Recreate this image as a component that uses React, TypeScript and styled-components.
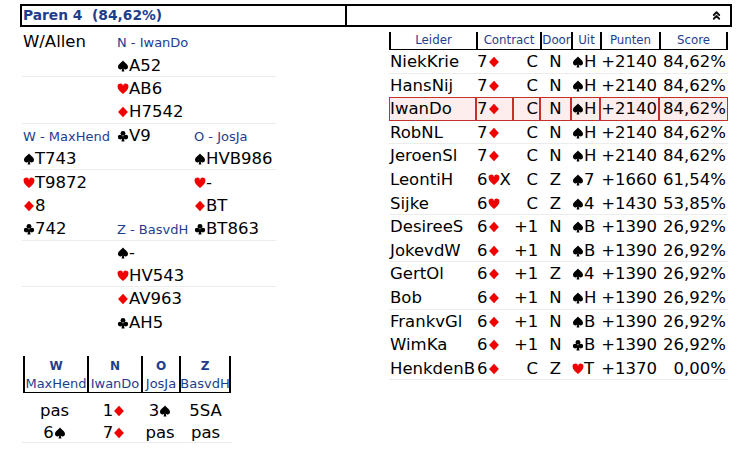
import styled, { createGlobalStyle } from "styled-components";
import { ChevronsUp } from "lucide-react";

const BLUE = "#1d3e8e";
const RED = "#f00000";

type SuitKey = "S" | "H" | "D" | "C";

const GlobalStyle = createGlobalStyle`
  body {
    margin: 0;
    background: #fff;
    color: #000;
    font-family: "DejaVu Sans", Verdana, sans-serif;
  }
`;

const SuitSvg = styled.svg<{ $red: boolean }>`
  width: 12px;
  height: 12px;
  vertical-align: -1px;
  fill: ${(p) => (p.$red ? RED : "#000")};
`;

const Suit = ({ s }: { s: SuitKey }) => (
  <SuitSvg viewBox="0 0 12 12" $red={s === "H" || s === "D"}>
    {s === "S" && (
      <path d="M6 0.6C4.5 2.6 1 4.4 1 7a2.4 2.4 0 0 0 4.3 1.5L4.6 11.5h2.8L6.7 8.5A2.4 2.4 0 0 0 11 7C11 4.4 7.5 2.6 6 0.6Z" />
    )}
    {s === "H" && (
      <path d="M6 11C2.6 8.1 0.6 6.1 0.6 3.8A2.7 2.7 0 0 1 6 2.9A2.7 2.7 0 0 1 11.4 3.8C11.4 6.1 9.4 8.1 6 11Z" />
    )}
    {s === "D" && <path d="M6 0.8L10.9 6L6 11.2L1.1 6Z" />}
    {s === "C" && (
      <>
        <circle cx="6" cy="3.3" r="2.4" />
        <circle cx="3.2" cy="7.1" r="2.4" />
        <circle cx="8.8" cy="7.1" r="2.4" />
        <path d="M5.3 6L4.5 11.5h3L6.7 6Z" />
      </>
    )}
  </SuitSvg>
);

// suit letters are marked with a leading "#": "7#D" -> 7 + diamond
const Cards = ({ text }: { text: string }) => {
  const parts: React.ReactNode[] = [];
  for (let i = 0; i < text.length; i++) {
    if (text[i] === "#") {
      parts.push(<Suit key={i} s={text[i + 1] as SuitKey} />);
      i++;
    } else {
      parts.push(text[i]);
    }
  }
  return <>{parts}</>;
};

/* ---------- title bar ---------- */

const Page = styled.div`
  width: 737px;
  padding: 4px 0 0 20px;
  box-sizing: border-box;
`;

const TitleBar = styled.div`
  display: flex;
  width: 712px;
  height: 23px;
  box-sizing: border-box;
  border: 2px solid #000;
`;

const TitleText = styled.div`
  width: 322px;
  border-right: 2px solid #000;
  padding-left: 1px;
  font-size: 13.8px;
  font-weight: bold;
  color: ${BLUE};
  line-height: 19px;
  white-space: pre;
`;

const TitleTools = styled.div`
  flex: 1;
  display: flex;
  justify-content: flex-end;
  align-items: center;
  padding-right: 7px;
  color: #111;
`;

/* ---------- main ---------- */

const Main = styled.div`
  display: flex;
`;

const LeftCol = styled.div`
  width: 369px;
  display: flex;
  flex-direction: column;
`;

const HandTable = styled.div`
  margin: 3px 0 0 2px;
  width: 254px;
`;

const HandRow = styled.div<{ $sep?: boolean }>`
  display: grid;
  grid-template-columns: 94px 77px 83px;
  height: 23.4px;
  align-items: center;
  font-size: 16.5px;
  white-space: nowrap;
  box-shadow: ${(p) => (p.$sep ? "inset 0 -1px 0 #ececec" : "none")};
`;

const HandCell = styled.div`
  padding-left: 1px;
`;

const Seat = styled.span`
  font-size: 13px;
  color: ${BLUE};
`;

const Dealer = styled.span`
  font-size: 16.5px;
`;

/* ---------- bidding ---------- */

const Bidding = styled.div`
  margin: 22px 0 0 3px;
  width: 208px;
`;

const BidGrid = styled.div`
  display: grid;
  grid-template-columns: 64px 54px 38px 52px;
`;

const BidHead = styled.div<{ $last?: boolean }>`
  height: 37px;
  box-sizing: border-box;
  border-left: 2px solid #000;
  border-right: ${(p) => (p.$last ? "2px solid #000" : "none")};
  border-bottom: 1px solid #000;
  display: flex;
  flex-direction: column;
  align-items: center;
  color: ${BLUE};
  white-space: nowrap;
`;

const BidDir = styled.div`
  height: 20px;
  line-height: 20px;
  font-size: 12px;
  font-weight: bold;
`;

const BidName = styled.div`
  height: 16px;
  line-height: 16px;
  font-size: 13px;
`;

const BidBody = styled.div`
  margin-top: 6px;
  margin-left: -1px;
  width: 210px;
  box-shadow: inset 0 -1px 0 #ececec;
`;

const BidRow = styled.div`
  display: grid;
  grid-template-columns: 65px 54px 38px 53px;
  height: 22px;
  align-items: center;
  font-size: 16.5px;
  text-align: center;
  white-space: nowrap;
`;

/* ---------- results ---------- */

const Results = styled.div`
  margin-top: 5px;
  width: 339px;
`;

const COLS = "87px 37px 27px 31px 29px 59px 69px";

const ResHead = styled.div`
  display: grid;
  grid-template-columns: 87px 64px 31px 29px 59px 69px;
  height: 18px;
  box-sizing: border-box;
  border-bottom: 1px solid #000;
`;

const HeadCell = styled.div<{ $last?: boolean }>`
  border-left: 2px solid #000;
  border-right: ${(p) => (p.$last ? "2px solid #000" : "none")};
  text-align: center;
  font-size: 11.8px;
  line-height: 17px;
  color: ${BLUE};
  white-space: nowrap;
`;

const ResRow = styled.div<{ $hl?: boolean; $sep?: boolean }>`
  display: grid;
  grid-template-columns: ${COLS};
  height: 23.6px;
  font-size: 16.5px;
  white-space: nowrap;
  background: ${(p) => (p.$hl ? "#fdeded" : "transparent")};
  box-shadow: ${(p) => (p.$sep ? "inset 0 -1px 0 #ececec" : "none")};
`;

const ResCell = styled.div<{ $align: "left" | "right" | "center"; $hl?: boolean }>`
  border: 1px solid ${(p) => (p.$hl ? "#c4302b" : "transparent")};
  text-align: ${(p) => p.$align};
  padding-right: ${(p) => (p.$align === "right" ? "1px" : "0")};
  line-height: 21.6px;
`;

/* ---------- data ---------- */

const hand: [React.ReactNode, React.ReactNode, React.ReactNode, boolean][] = [
  [<Dealer>W/Allen</Dealer>, <Seat>N - IwanDo</Seat>, null, false],
  [null, <Cards text="#SA52" />, null, true],
  [null, <Cards text="#HAB6" />, null, false],
  [null, <Cards text="#DH7542" />, null, true],
  [<Seat>W - MaxHend</Seat>, <Cards text="#CV9" />, <Seat>O - JosJa</Seat>, false],
  [<Cards text="#ST743" />, null, <Cards text="#SHVB986" />, true],
  [<Cards text="#HT9872" />, null, <Cards text="#H-" />, false],
  [<Cards text="#D8" />, null, <Cards text="#DBT" />, false],
  [<Cards text="#C742" />, <Seat>Z - BasvdH</Seat>, <Cards text="#CBT863" />, true],
  [null, <Cards text="#S-" />, null, false],
  [null, <Cards text="#HHV543" />, null, true],
  [null, <Cards text="#DAV963" />, null, false],
  [null, <Cards text="#CAH5" />, null, false],
];

const bidders = [
  ["W", "MaxHend"],
  ["N", "IwanDo"],
  ["O", "JosJa"],
  ["Z", "BasvdH"],
];

const bids = [
  ["pas", "1#D", "3#S", "5SA"],
  ["6#S", "7#D", "pas", "pas"],
];

type Result = [string, string, string, string, string, string, string];

const results: Result[] = [
  ["NiekKrie", "7#D", "C", "N", "#SH", "+2140", "84,62%"],
  ["HansNij", "7#D", "C", "N", "#SH", "+2140", "84,62%"],
  ["IwanDo", "7#D", "C", "N", "#SH", "+2140", "84,62%"],
  ["RobNL", "7#D", "C", "N", "#SH", "+2140", "84,62%"],
  ["JeroenSl", "7#D", "C", "N", "#SH", "+2140", "84,62%"],
  ["LeontiH", "6#HX", "C", "Z", "#S7", "+1660", "61,54%"],
  ["Sijke", "6#H", "C", "Z", "#S4", "+1430", "53,85%"],
  ["DesireeS", "6#D", "+1", "N", "#SB", "+1390", "26,92%"],
  ["JokevdW", "6#D", "+1", "N", "#SB", "+1390", "26,92%"],
  ["GertOl", "6#D", "+1", "Z", "#S4", "+1390", "26,92%"],
  ["Bob", "6#D", "+1", "N", "#SH", "+1390", "26,92%"],
  ["FrankvGl", "6#D", "+1", "N", "#SB", "+1390", "26,92%"],
  ["WimKa", "6#D", "+1", "N", "#CB", "+1390", "26,92%"],
  ["HenkdenB", "6#D", "C", "Z", "#HT", "+1370", "0,00%"],
];

const resultSeps = [0, 3, 6, 8, 10, 13];
const aligns: ("left" | "right" | "center")[] = ["left", "left", "right", "center", "left", "right", "right"];

const App = () => {
  return (
    <Page>
      <GlobalStyle />
      <TitleBar>
        <TitleText>Paren 4  (84,62%)</TitleText>
        <TitleTools>
          <ChevronsUp size={13} strokeWidth={3.5} />
        </TitleTools>
      </TitleBar>
      <Main>
        <LeftCol>
          <HandTable>
            {hand.map(([a, b, c, sep], i) => (
              <HandRow key={i} $sep={sep}>
                <HandCell>{a}</HandCell>
                <HandCell>{b}</HandCell>
                <HandCell>{c}</HandCell>
              </HandRow>
            ))}
          </HandTable>
          <Bidding>
            <BidGrid>
              {bidders.map(([dir, name], i) => (
                <BidHead key={dir} $last={i === bidders.length - 1}>
                  <BidDir>{dir}</BidDir>
                  <BidName>{name}</BidName>
                </BidHead>
              ))}
            </BidGrid>
            <BidBody>
              {bids.map((row, i) => (
                <BidRow key={i}>
                  {row.map((b, j) => (
                    <div key={j}>
                      <Cards text={b} />
                    </div>
                  ))}
                </BidRow>
              ))}
            </BidBody>
          </Bidding>
        </LeftCol>
        <Results>
          <ResHead>
            <HeadCell>Leider</HeadCell>
            <HeadCell>Contract</HeadCell>
            <HeadCell>Door</HeadCell>
            <HeadCell>Uit</HeadCell>
            <HeadCell>Punten</HeadCell>
            <HeadCell $last>Score</HeadCell>
          </ResHead>
          {results.map((r, i) => {
            const hl = r[0] === "IwanDo";
            return (
              <ResRow key={r[0]} $hl={hl} $sep={resultSeps.includes(i)}>
                {r.map((v, j) => (
                  <ResCell key={j} $align={aligns[j]} $hl={hl}>
                    <Cards text={v} />
                  </ResCell>
                ))}
              </ResRow>
            );
          })}
        </Results>
      </Main>
    </Page>
  );
};

export default App;
